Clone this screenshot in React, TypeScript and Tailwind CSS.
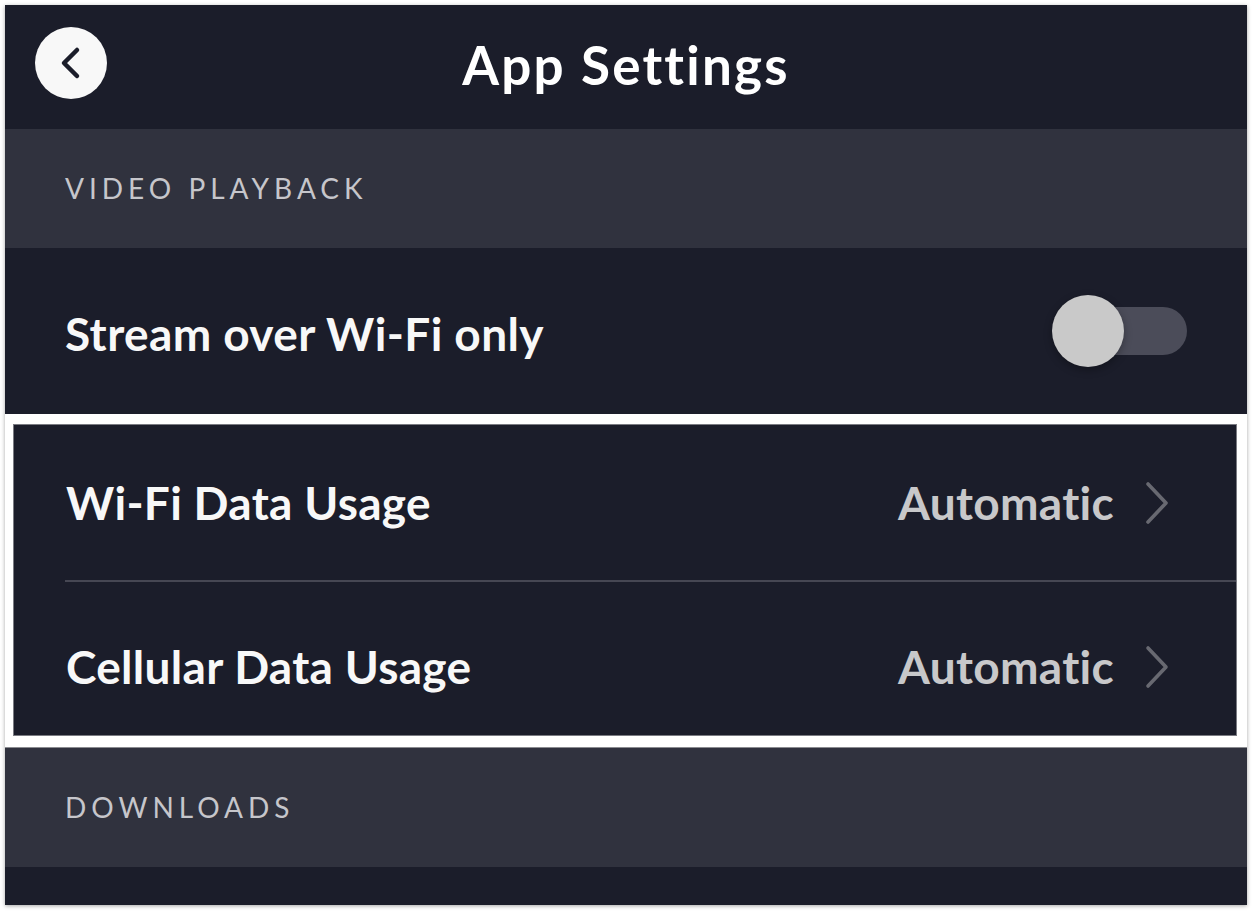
import React from "react";

const font = { fontFamily: "Lato, 'Noto Sans', sans-serif" } as React.CSSProperties;

function Chevron() {
  return (
    <svg width="26" height="44" viewBox="0 0 26 44" className="ml-[30px]">
      <path d="M4 3 L22 22 L4 41" fill="none" stroke="#686971" strokeWidth="3.6" strokeLinecap="round" strokeLinejoin="round" />
    </svg>
  );
}

function NavRow({ label, offset }: { label: string; offset: string }) {
  return (
    <div className={`flex h-full items-center pl-[52px] pr-[66px] ${offset}`}>
      <span className="text-[46px] font-bold text-[#f8f8f8] tracking-[0.3px]">{label}</span>
      <span className="ml-auto text-[46px] font-bold text-[#c8c8ca] tracking-[0.3px]">Automatic</span>
      <Chevron />
    </div>
  );
}

export default function App() {
  return (
    <div className="w-[1256px] h-[914px] bg-white p-[5px]" style={font}>
      <div className="w-[1242px] h-[900px] bg-[#1b1d2a] flex flex-col shadow-[0_1px_4px_rgba(0,0,0,0.35)] overflow-hidden">
        {/* header */}
        <div className="relative h-[124px] flex items-center justify-center shrink-0">
          <div className="absolute left-[30px] top-[22px] w-[72px] h-[72px] rounded-full bg-[#f8f8f8] flex items-center justify-center">
            <svg width="30" height="36" viewBox="0 0 30 36">
              <path d="M21 5 L8 18 L21 31" fill="none" stroke="#1b1d2a" strokeWidth="4.5" strokeLinecap="round" strokeLinejoin="round" />
            </svg>
          </div>
          <span className="text-[53px] font-bold text-white leading-none -mt-[6px] tracking-[2.2px]">App Settings</span>
        </div>
        {/* section */}
        <div className="h-[119px] bg-[#30323e] flex items-center pl-[60px] pb-[2px] shrink-0">
          <span className="text-[28px] text-[#c6c6cb] tracking-[5px] font-normal">VIDEO PLAYBACK</span>
        </div>
        {/* stream row */}
        <div className="h-[166px] flex items-center pl-[60px] pr-[60px] pt-[4px] shrink-0">
          <span className="text-[46px] font-bold text-[#f8f8f8] tracking-[0.4px]">Stream over Wi-Fi only</span>
          <div className="ml-auto relative w-[135px] h-[72px] flex items-center -mt-[4px]">
            <div className="absolute right-0 w-[110px] h-[48px] rounded-full bg-[#4b4c59]" />
            <div className="absolute left-0 w-[72px] h-[72px] rounded-full bg-[#c9c9c9] shadow-[0_3px_8px_rgba(0,0,0,0.3)]" />
          </div>
        </div>
        {/* highlighted frame */}
        <div className="h-[333px] bg-white pl-[8px] pr-[10px] pt-[10px] pb-[11px] shrink-0">
          <div className="h-full bg-[#1b1d2a] border border-[#7a7b82] flex flex-col">
            <div className="h-[155px]">
              <NavRow label="Wi-Fi Data Usage" offset="pt-[0px]" />
            </div>
            <div className="h-[2px] bg-[#464753] ml-[51px]" />
            <div className="flex-1">
              <NavRow label="Cellular Data Usage" offset="pt-[16px]" />
            </div>
          </div>
        </div>
        {/* downloads */}
        <div className="h-[120px] bg-[#30323e] flex items-center pl-[60px] pb-[2px] shrink-0 border-t border-[#8a8b90]">
          <span className="text-[28px] text-[#c6c6cb] tracking-[5px] font-normal">DOWNLOADS</span>
        </div>
        <div className="flex-1 bg-[#1b1d2a]" />
      </div>
    </div>
  );
}
